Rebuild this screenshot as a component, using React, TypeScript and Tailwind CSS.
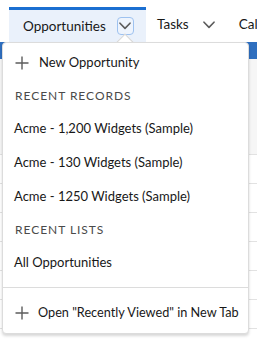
import React from "react";

const Plus = () => (
  <svg width="14" height="14" viewBox="0 0 14 14" className="shrink-0">
    <path d="M7 0.5V13.5M0.5 7H13.5" stroke="#5c5c5c" strokeWidth="1.4" fill="none" />
  </svg>
);

const Chevron = ({ color = "#5c5c5c" }: { color?: string }) => (
  <svg width="12" height="8" viewBox="0 0 12 8">
    <path d="M1 1.2L6 6.4L11 1.2" stroke={color} strokeWidth="1.6" fill="none" strokeLinecap="round" strokeLinejoin="round" />
  </svg>
);

export default function App() {
  const font = { fontFamily: "Lato, 'Open Sans', sans-serif" };
  return (
    <div className="relative w-[257px] h-[341px] overflow-hidden bg-white" style={font}>
      {/* tab bar */}
      <div className="flex h-[42px] items-end bg-white">
        <div className="ml-[9px] flex h-[35px] w-[137px] shrink-0 items-center border-t-[3px] border-[#1b6fd1] bg-[#eaf1fb] pl-[14px]">
          <span className="text-[13.5px] text-[#181818]">Opportunities</span>
          <div className="ml-[11px] flex h-[18px] w-[17px] items-center justify-center rounded-[4px] border border-[#9ec2f0] bg-[#eef4fd]">
            <Chevron />
          </div>
        </div>
        <div className="flex h-[35px] min-w-0 items-center overflow-hidden whitespace-nowrap pl-[11px]">
          <span className="text-[13.5px] text-[#181818]">Tasks</span>
          <span className="ml-[14px] flex"><Chevron /></span>
          <span className="ml-[24px] text-[13.5px] text-[#181818]">Cal</span>
        </div>
      </div>

      {/* page behind */}
      <div className="flex flex-col">
        <div className="h-[17px] bg-[#2f6fbf]" />
        <div className="h-[96px] border-b border-[#e2e2e2] bg-[#f6f6f6]" />
        {[0, 1, 2, 3, 4, 5].map((i) => (
          <div key={i} className="h-[29px] border-b border-[#e2e2e2] bg-white" />
        ))}
      </div>

      {/* dropdown nub */}
      <div className="absolute left-[119px] top-[36px] h-[12px] w-[12px] rotate-45 border-l border-t border-[#d6d6d6] bg-white" />

      {/* dropdown */}
      <div className="absolute left-[2px] top-[42px] flex w-[247px] flex-col rounded-[4px] border border-[#dcdcdc] bg-white pb-[3px] pt-[3px] shadow-[0_2px_3px_rgba(0,0,0,0.16)]">
        <div className="flex h-[34px] items-center pl-[12px] text-[13px] text-[#181818]">
          <Plus />
          <span className="ml-[10px]">New Opportunity</span>
        </div>
        <div className="flex h-[32px] items-center pl-[12px] text-[12px] tracking-[0.08em] text-[#4a4a4a]">
          RECENT RECORDS
        </div>
        <div className="flex h-[34px] items-center pl-[11px] text-[13px] text-[#181818]">Acme - 1,200 Widgets (Sample)</div>
        <div className="flex h-[34px] items-center pl-[11px] text-[13px] text-[#181818]">Acme - 130 Widgets (Sample)</div>
        <div className="flex h-[34px] items-center pl-[11px] text-[13px] text-[#181818]">Acme - 1250 Widgets (Sample)</div>
        <div className="flex h-[32px] items-center pl-[12px] text-[12px] tracking-[0.08em] text-[#4a4a4a]">
          RECENT LISTS
        </div>
        <div className="flex h-[34px] items-center pl-[11px] text-[13px] text-[#181818]">All Opportunities</div>
        <div className="mt-[7px] border-t border-[#dcdcdc]" />
        <div className="mt-[8px] flex h-[34px] items-center pl-[12px] text-[12.7px] text-[#181818]">
          <Plus />
          <span className="ml-[9px]">Open "Recently Viewed" in New Tab</span>
        </div>
      </div>
    </div>
  );
}
